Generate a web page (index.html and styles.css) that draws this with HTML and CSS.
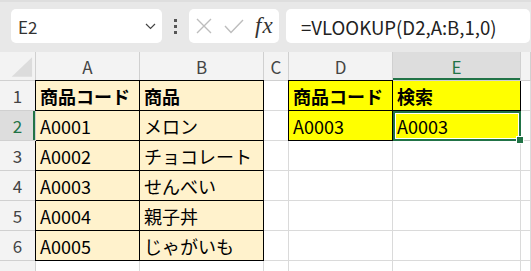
FILE: index.html
```html
<!DOCTYPE html>
<html>
  <head>
    <title>VLOOKUP</title>
    <link rel="stylesheet" href="styles.css">
  </head>
  <body>
    <div class="toolbar">
      <div class="namebox">
        <span class="cellref">E2</span>
        <svg class="chevron" width="11" height="7" viewBox="0 0 11 7"><path d="M1 1 L5.5 5.5 L10 1" fill="none" stroke="#444" stroke-width="1.2"/></svg>
      </div>
      <div class="dots"><i></i><i></i><i></i></div>
      <div class="fxbox">
        <svg class="icon" width="16" height="16" viewBox="0 0 16 16"><path d="M1 1 L15 15 M15 1 L1 15" stroke="#bdbdbd" stroke-width="1.4" fill="none"/></svg>
        <svg class="icon" width="20" height="15" viewBox="0 0 20 15"><path d="M1 7 L7 13.5 L19 1" stroke="#bdbdbd" stroke-width="1.4" fill="none"/></svg>
        <span class="fx">fx</span>
      </div>
      <div class="formula">=VLOOKUP(D2,A:B,1,0)</div>
    </div>

    <div class="sheet">
      <!-- column headers -->
      <div class="hdr corner"><svg width="36" height="29" viewBox="0 0 36 29"><polygon points="33,5 33,25 12,25" fill="#dcdcdc"/></svg></div>
      <div class="hdr col">A</div>
      <div class="hdr col">B</div>
      <div class="hdr col">C</div>
      <div class="hdr col">D</div>
      <div class="hdr col sel-col">E</div>
      <div class="hdr col"></div>

      <div class="hdr row">1</div>
      <div class="cell b tan bold">商品コード</div>
      <div class="cell b tan bold">商品</div>
      <div class="cell"></div>
      <div class="cell b yellow bold">商品コード</div>
      <div class="cell b yellow bold no-top">検索</div>
      <div class="cell"></div>

      <div class="hdr row sel-row">2</div>
      <div class="cell b tan no-left">A0001</div>
      <div class="cell b tan">メロン</div>
      <div class="cell"></div>
      <div class="cell b yellow">A0003</div>
      <div class="cell b yellow active">A0003</div>
      <div class="cell"></div>

      <div class="hdr row">3</div>
      <div class="cell b tan">A0002</div>
      <div class="cell b tan">チョコレート</div>
      <div class="cell"></div>
      <div class="cell"></div>
      <div class="cell"></div>
      <div class="cell"></div>

      <div class="hdr row">4</div>
      <div class="cell b tan">A0003</div>
      <div class="cell b tan">せんべい</div>
      <div class="cell"></div>
      <div class="cell"></div>
      <div class="cell"></div>
      <div class="cell"></div>

      <div class="hdr row">5</div>
      <div class="cell b tan">A0004</div>
      <div class="cell b tan">親子丼</div>
      <div class="cell"></div>
      <div class="cell"></div>
      <div class="cell"></div>
      <div class="cell"></div>

      <div class="hdr row">6</div>
      <div class="cell b tan">A0005</div>
      <div class="cell b tan">じゃがいも</div>
      <div class="cell"></div>
      <div class="cell"></div>
      <div class="cell"></div>
      <div class="cell"></div>

      <div class="hdr row">7</div>
      <div class="cell"></div>
      <div class="cell"></div>
      <div class="cell"></div>
      <div class="cell"></div>
      <div class="cell"></div>
      <div class="cell"></div>
    </div>
  </body>
</html>
```

FILE: styles.css
```css
html, body {
  margin: 0;
  padding: 0;
  height: 100%;
  overflow: hidden;
  background: #fff;
  font-family: "Noto Sans CJK JP", "Noto Sans", sans-serif;
}

/* formula bar */
.toolbar {
  height: 52px;
  box-sizing: border-box;
  background: #e8e8e8;
  border-top: 2px solid #dedede;
  padding: 7px 1px 9px 11px;
  display: flex;
  align-items: stretch;
}
.namebox {
  width: 151px;
  background: #fff;
  border-radius: 5px;
  display: flex;
  align-items: center;
  padding: 0 6px 0 7px;
  box-sizing: border-box;
}
.cellref {
  font-size: 17px;
  color: #333;
  flex: 1;
}
.dots {
  width: 27px;
  display: flex;
  flex-direction: column;
  align-items: center;
  justify-content: center;
  gap: 3px;
}
.dots i {
  display: block;
  width: 3px;
  height: 3px;
  background: #555;
}
.fxbox {
  width: 90px;
  background: #fff;
  border-radius: 5px;
  display: flex;
  align-items: center;
  padding-left: 7px;
  box-sizing: border-box;
}
.fxbox .icon {
  margin-right: 12px;
}
.fx {
  font-family: "Liberation Serif", serif;
  font-style: italic;
  font-size: 23px;
  color: #333;
  margin-left: -1px;
  letter-spacing: 1px;
}
.formula {
  flex: 1;
  margin-left: 7px;
  background: #fff;
  border-radius: 5px;
  display: flex;
  align-items: center;
  padding-left: 15px;
  font-size: 18.6px;
  color: #222;
}

/* grid */
.sheet {
  display: grid;
  grid-template-columns: 36px 104px 124px 25px 104px 128px 1fr;
  grid-template-rows: 29px repeat(7, 30px);
}
.hdr, .cell {
  box-sizing: border-box;
  border-right: 1px solid #dadada;
  border-bottom: 1px solid #dadada;
  display: flex;
  align-items: center;
}
.hdr {
  background: #f3f3f3;
  color: #444;
  font-size: 17px;
  justify-content: center;
  border-color: #d0d0d0;
}
.hdr.sel-col {
  background: #dddddd;
  color: #217346;
  position: relative;
  z-index: 1;
  box-shadow: inset 0 -2px 0 #217346;
}
.hdr.sel-row {
  background: #dddddd;
  color: #217346;
  position: relative;
  z-index: 1;
  box-shadow: inset -2px 0 0 #217346;
}
.cell {
  font-size: 18px;
  color: #000;
  padding: 1px 0 0 4px;
  white-space: nowrap;
}
.cell.b {
  border-right-color: #000;
  border-bottom-color: #000;
  box-shadow: -1px 0 0 #000, 0 -1px 0 #000, -1px -1px 0 #000;
}
.cell.b.no-top {
  box-shadow: -1px 0 0 #000;
}
.tan {
  background: #fff2cc;
}
.yellow {
  background: #ffff00;
}
.bold {
  font-weight: 700;
}

/* active cell */
.active {
  position: relative;
  z-index: 2;
}
.active::after {
  content: "";
  position: absolute;
  top: 0;
  left: 0;
  right: -1px;
  bottom: -1px;
  border: 2px solid #217346;
  box-shadow: inset 0 0 0 1px #fff;
}
.active::before {
  content: "";
  position: absolute;
  right: -4px;
  bottom: -4px;
  width: 6px;
  height: 6px;
  background: #217346;
  border: 1px solid #fff;
  z-index: 1;
}
```
